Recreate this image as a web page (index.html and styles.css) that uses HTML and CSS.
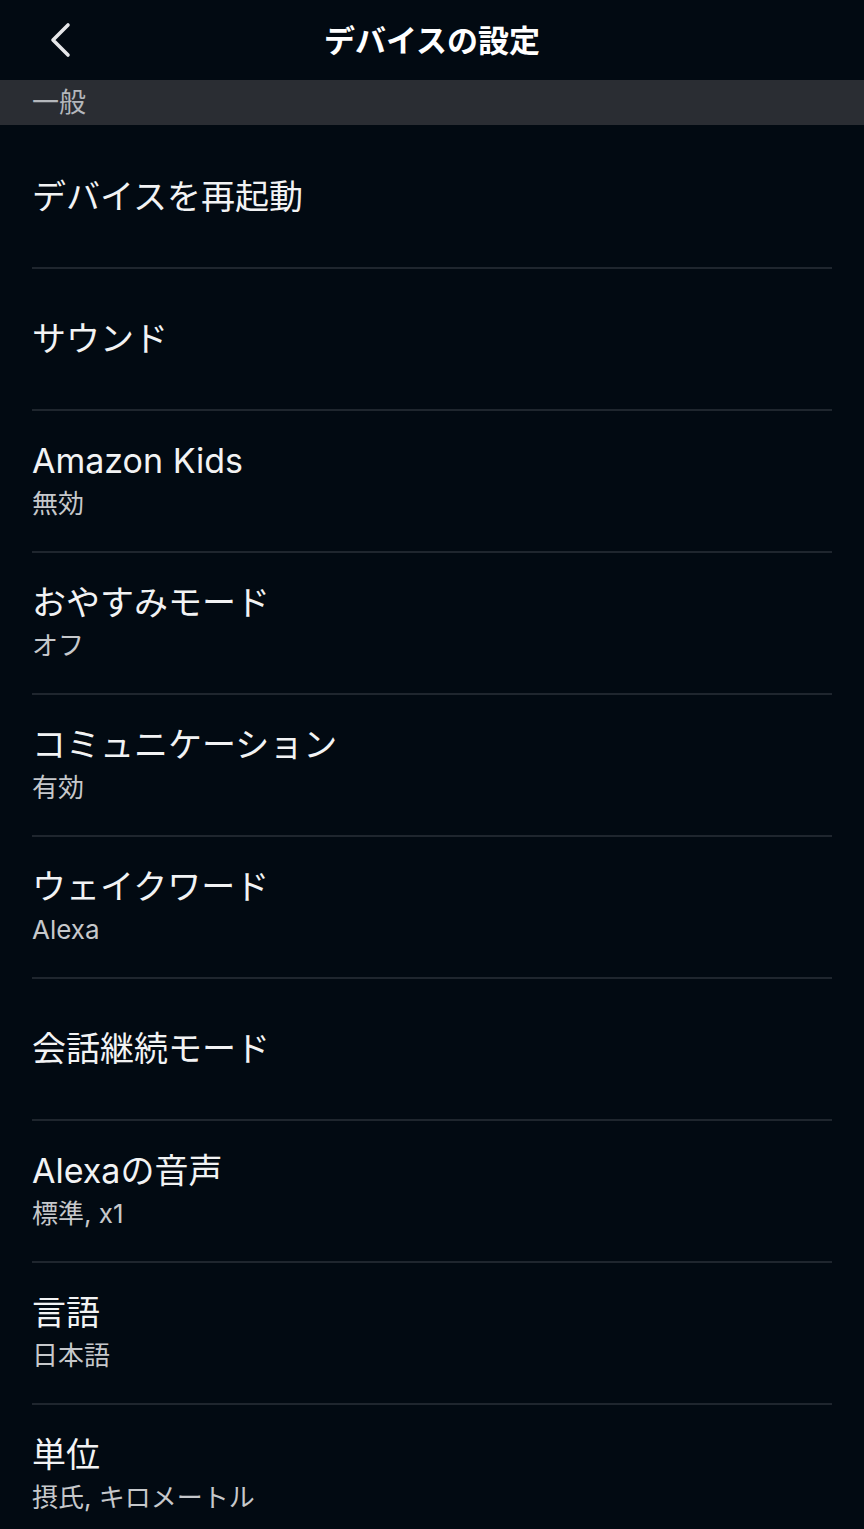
FILE: index.html
```html
<!DOCTYPE html>
<html lang="ja">
<head>
<meta charset="utf-8">
<title>デバイスの設定</title>
<link rel="stylesheet" href="styles.css">
</head>
<body>
<header class="topbar">
  <button class="back" aria-label="戻る">
    <svg width="26" height="36" viewBox="0 0 26 36"><path d="M20 3 L5 18 L20 33" fill="none" stroke="#e6e7e9" stroke-width="3.6" stroke-linecap="round" stroke-linejoin="round"/></svg>
  </button>
  <h1 class="title">デバイスの設定</h1>
</header>
<div class="section">一般</div>
<ul class="list">
  <li class="row"><div class="main">デバイスを再起動</div></li>
  <li class="row"><div class="main">サウンド</div></li>
  <li class="row"><div class="main">Amazon Kids</div><div class="sub">無効</div></li>
  <li class="row"><div class="main">おやすみモード</div><div class="sub">オフ</div></li>
  <li class="row"><div class="main">コミュニケーション</div><div class="sub">有効</div></li>
  <li class="row"><div class="main">ウェイクワード</div><div class="sub">Alexa</div></li>
  <li class="row"><div class="main">会話継続モード</div></li>
  <li class="row"><div class="main">Alexaの音声</div><div class="sub">標準, x1</div></li>
  <li class="row"><div class="main">言語</div><div class="sub">日本語</div></li>
  <li class="row"><div class="main">単位</div><div class="sub">摂氏, キロメートル</div></li>
</ul>
</body>
</html>
```

FILE: styles.css
```css
html, body {
  margin: 0;
  padding: 0;
  background: #020a12;
  color: #f2f3f4;
  font-family: "Inter", "Noto Sans CJK JP", sans-serif;
}
.topbar {
  height: 80px;
  display: flex;
  align-items: center;
  justify-content: center;
  position: relative;
}
.back {
  position: absolute;
  left: 48px;
  top: 22px;
  background: none;
  border: 0;
  padding: 0;
  width: 26px;
  height: 36px;
}
.title {
  margin: 0 0 4px 0;
  font-size: 31px;
  font-weight: 700;
  color: #ffffff;
  font-family: "Noto Sans CJK JP", sans-serif;
}
.section {
  height: 45px;
  background: #2a2d33;
  box-sizing: border-box;
  padding-left: 32px;
  font-size: 27px;
  line-height: 42px;
  color: #b4b7bc;
  font-family: "Noto Sans CJK JP", sans-serif;
}
.list {
  list-style: none;
  margin: 0;
  padding: 0 32px;
}
.row {
  height: 140px;
  border-bottom: 2px solid #1f262e;
  display: flex;
  flex-direction: column;
  justify-content: center;
  padding-top: 2px;
  box-sizing: content-box;
}
.row:not(:first-child) {
  padding-top: 0;
}
.main {
  font-size: 34px;
  line-height: 44px;
  color: #f2f3f4;
}
.sub {
  margin-top: 2px;
  font-size: 26px;
  line-height: 38px;
  color: #c6c8cb;
}
```
